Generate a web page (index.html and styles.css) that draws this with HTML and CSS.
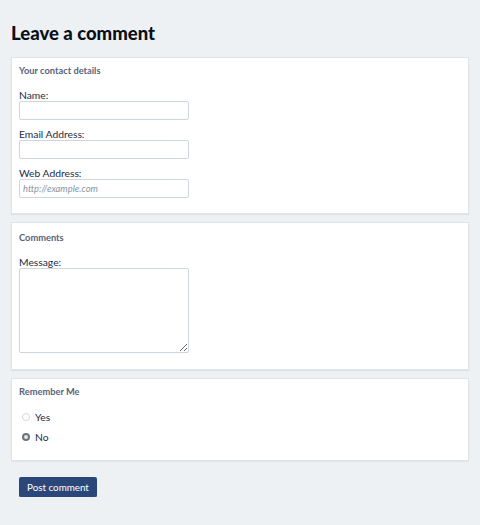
FILE: index.html
```html
<!DOCTYPE html>
<html lang="en">
<head>
<meta charset="utf-8">
<title>Leave a comment</title>
<link rel="stylesheet" href="styles.css">
</head>
<body>
<main class="page">
  <h1 class="title">Leave a comment</h1>
  <form class="form">
    <section class="box box-contact">
      <h2 class="box-title">Your contact details</h2>
      <div class="field">
        <label class="label" for="name">Name:</label>
        <input class="input" id="name" type="text">
      </div>
      <div class="field">
        <label class="label" for="email">Email Address:</label>
        <input class="input" id="email" type="email">
      </div>
      <div class="field">
        <label class="label" for="web">Web Address:</label>
        <input class="input" id="web" type="text" placeholder="http://example.com">
      </div>
    </section>
    <section class="box box-comments">
      <h2 class="box-title">Comments</h2>
      <div class="field">
        <label class="label" for="msg">Message:</label>
        <textarea class="textarea" id="msg"></textarea>
      </div>
    </section>
    <section class="box">
      <h2 class="box-title">Remember Me</h2>
      <div class="radios">
        <label class="radio"><input class="radio-input" type="radio" name="rem"><span>Yes</span></label>
        <label class="radio"><input class="radio-input" type="radio" name="rem" checked><span>No</span></label>
      </div>
    </section>
    <div class="actions">
      <button class="button" type="button">Post comment</button>
    </div>
  </form>
</main>
</body>
</html>
```

FILE: styles.css
```css
* { box-sizing: border-box; }
html, body { margin: 0; }
body {
  background: #edf1f4;
  font-family: Lato, "Noto Sans", sans-serif;
  color: #1d2b45;
}
.page { padding: 20px 11px 0; }
.title {
  margin: 0 0 11px;
  font-size: 18.5px;
  font-weight: 900;
  line-height: 26px;
  color: #0b0f17;
}
.form { display: flex; flex-direction: column; gap: 8px; }
.box {
  background: #fff;
  border: 1px solid #dfe4e8;
  box-shadow: 0 1px 1px rgba(0,0,0,0.05);
  padding: 7px 7px 17px;
  display: flex;
  flex-direction: column;
}
.box-contact { padding-bottom: 15px; }
.box-comments { padding-top: 9px; padding-bottom: 16px; }
.box-title {
  margin: 0;
  font-size: 9.3px;
  font-weight: 700;
  color: #59637a;
  line-height: 12px;
}
.field { display: flex; flex-direction: column; margin-top: 8px; }
.box-title + .field { margin-top: 12px; }
.label { font-size: 10.3px; line-height: 12px; color: #1d2b45; }
.input {
  width: 170px;
  height: 19px;
  border: 1px solid #cfd6dc;
  border-radius: 2px;
  font: italic 9.4px Lato, sans-serif;
  padding: 0 3px;
  margin: 0;
  color: #333;
}
.input::placeholder { color: #8a93a0; }
.textarea {
  display: block;
  width: 170px;
  height: 85px;
  border: 1px solid #cfd6dc;
  border-radius: 2px;
  resize: vertical;
  margin: 0;
}
.radios { display: flex; flex-direction: column; gap: 8px; margin-top: 13px; padding-left: 3px; }
.radio { display: flex; align-items: center; gap: 5px; font-size: 10.3px; line-height: 12px; }
.radio-input {
  appearance: none;
  -webkit-appearance: none;
  margin: 0;
  width: 8px;
  height: 8px;
  border-radius: 50%;
  border: 1px solid #d3d8dd;
  background: #fff;
}
.radio-input:checked {
  border: 2px solid #6f747c;
  background: #e4e6e9;
}
.actions { padding: 8px 8px 0; }
.button {
  display: block;
  background: #2b4779;
  color: #fff;
  border: 0;
  border-radius: 2px;
  box-shadow: 0 2px 0 #9aa7b8;
  font: 9.8px Lato, sans-serif;
  height: 20px;
  width: 78px;
  padding: 0;
}
```
